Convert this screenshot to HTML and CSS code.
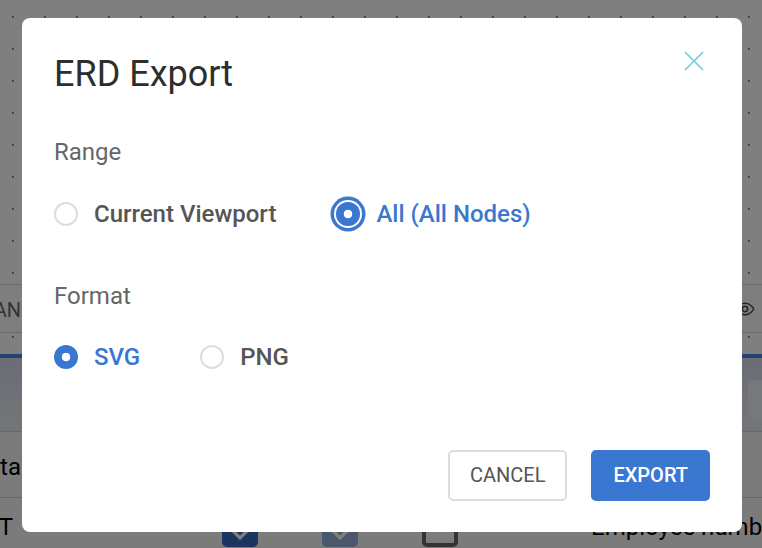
FILE: index.html
```html
<!DOCTYPE html>
<html lang="en">
<head>
<meta charset="utf-8">
<title>ERD Export</title>
<link rel="stylesheet" href="styles.css">
</head>
<body>
<div class="app">
  <div class="canvas"></div>
  <div class="thead">
    <div class="clip"><span class="thead-text">BOOLEAN</span></div>
    <svg class="eye" viewBox="0 0 24 24" width="20" height="20" fill="none" stroke="#444" stroke-width="1.8" stroke-linecap="round" stroke-linejoin="round"><path d="M1.5 12S5.5 5 12 5s10.5 7 10.5 7-4 7-10.5 7S1.5 12 1.5 12z"/><circle cx="12" cy="12" r="3.2"/></svg>
  </div>
  <div class="gapband"></div>
  <div class="accent"></div>
  <div class="group"><div class="card"></div></div>
  <div class="row r1"><div class="clip"><span class="cell-text">Data</span></div></div>
  <div class="row r2">
    <div class="clip clip-narrow"><span class="cell-text">INT</span></div>
    <span class="chk chk-navy"><svg viewBox="0 0 36 36" width="36" height="36"><polyline points="8,17 18,27 28,17" fill="none" stroke="#fff" stroke-width="3.2"/></svg></span>
    <span class="chk chk-slate"><svg viewBox="0 0 36 36" width="36" height="36"><polyline points="8,17 18,27 28,17" fill="none" stroke="#fff" stroke-width="3.2"/></svg></span>
    <span class="chk chk-empty"></span>
    <span class="cell-text col-name">Employee number</span>
  </div>
</div>

<div class="overlay">
  <div class="dialog" role="dialog" aria-labelledby="dlg-title">
    <div class="dlg-head">
      <h2 id="dlg-title" class="dlg-title">ERD Export</h2>
      <button class="close" aria-label="Close">
        <svg viewBox="0 0 20 20" width="20" height="20"><path d="M1 1L19 19M19 1L1 19" stroke="#72cbe7" stroke-width="1.7" fill="none"/></svg>
      </button>
    </div>

    <div class="field">
      <div class="field-label">Range</div>
      <div class="options">
        <label class="opt"><span class="radio"></span><span class="opt-text">Current Viewport</span></label>
        <label class="opt on focus"><span class="radio"></span><span class="opt-text">All (All Nodes)</span></label>
      </div>
    </div>

    <div class="field field-2">
      <div class="field-label">Format</div>
      <div class="options">
        <label class="opt on"><span class="radio"></span><span class="opt-text">SVG</span></label>
        <label class="opt"><span class="radio"></span><span class="opt-text">PNG</span></label>
      </div>
    </div>

    <div class="dlg-foot">
      <button class="btn btn-cancel">CANCEL</button>
      <button class="btn btn-primary">EXPORT</button>
    </div>
  </div>
</div>
</body>
</html>
```

FILE: styles.css
```css
html, body {
  margin: 0;
  padding: 0;
}
body {
  width: 762px;
  height: 548px;
  overflow: hidden;
  font-family: Roboto, "Liberation Sans", sans-serif;
}

/* ---------- background application ---------- */
.app {
  height: 548px;
  overflow: hidden;
  display: flex;
  flex-direction: column;
  background-color: #fff;
  background-image: radial-gradient(circle, #909090 1px, transparent 1.5px);
  background-size: 32px 32px;
  background-position: -3px 1px;
}
.canvas {
  height: 284px;
  flex: none;
}
.thead {
  flex: none;
  height: 47px;
  border-top: 1px solid #d6d6d6;
  border-bottom: 1px solid #d6d6d6;
  background: #fcfcfc;
  display: flex;
  justify-content: space-between;
  align-items: flex-start;
}
.clip {
  width: 21px;
  flex: none;
  overflow: hidden;
  display: flex;
  justify-content: flex-end;
  white-space: nowrap;
}
.clip-narrow {
  width: 13px;
}
.thead-text {
  font-size: 20px;
  line-height: 24px;
  color: #666;
  padding-top: 13px;
}
.eye {
  margin: 14px 7px 0 0;
}
.gapband {
  height: 21px;
  flex: none;
}
.accent {
  height: 4px;
  flex: none;
  background: #4a86e0;
}
.group {
  height: 73px;
  flex: none;
  border-bottom: 1px solid #cfcfcf;
  background: linear-gradient(#d3dbea, #e9ecf1);
  display: flex;
  justify-content: flex-end;
  align-items: flex-start;
}
.card {
  width: 14px;
  height: 40px;
  margin-top: 22px;
  border-radius: 8px 0 0 8px;
  background: #eef1f6;
}
.row {
  flex: none;
  background: #f6f6f6;
  display: flex;
  align-items: flex-start;
  white-space: nowrap;
}
.r1 {
  height: 44px;
  padding-top: 21px;
  border-bottom: 1px solid #cfcfcf;
}
.r2 {
  flex: 1;
  padding-top: 15px;
}
.cell-text {
  font-size: 24px;
  line-height: 28px;
  color: #000;
  white-space: nowrap;
}
.chk {
  flex: none;
  width: 36px;
  height: 36px;
  box-sizing: border-box;
  border-radius: 5px;
  margin-top: -2px;
}
.chk svg {
  display: block;
}
.chk-navy {
  margin-left: 209px;
  background: #366ac0;
}
.chk-slate {
  margin-left: 64px;
  background: #94b0d8;
}
.chk-empty {
  margin-left: 64px;
  border: 4px solid #666;
}
.col-name {
  flex: none;
  margin-left: 133px;
}

/* ---------- modal ---------- */
.overlay {
  position: fixed;
  inset: 0;
  background: rgba(0, 0, 0, 0.5);
  padding: 18px 0 0 22px;
}
.dialog {
  width: 720px;
  height: 514px;
  box-sizing: border-box;
  padding: 32px 32px 31px;
  background: #fff;
  border-radius: 8px;
  display: flex;
  flex-direction: column;
}
.dlg-head {
  display: flex;
  justify-content: space-between;
  align-items: flex-start;
}
.dlg-title {
  margin: 0;
  font-size: 36px;
  font-weight: 400;
  line-height: 48px;
  color: #2e2e2e;
}
.close {
  width: 20px;
  height: 20px;
  padding: 0;
  border: 0;
  background: none;
  margin: 1px 6px 0 0;
}
.close svg {
  display: block;
}
.field-label {
  margin-top: 38px;
  font-size: 24px;
  line-height: 32px;
  color: #666;
}
.field-2 .field-label {
  margin-top: 49px;
}
.options {
  margin-top: 29px;
  height: 34px;
  display: flex;
  align-items: center;
  gap: 60px;
}
.field-2 .options {
  margin-top: 28px;
}
.opt {
  display: flex;
  align-items: center;
  gap: 16px;
  font-size: 24px;
  line-height: 28px;
  font-weight: 500;
  color: #555;
}
.radio {
  flex: none;
  width: 24px;
  height: 24px;
  box-sizing: border-box;
  border: 2px solid #dcdce3;
  border-radius: 50%;
  background: #fff;
}
.opt.on .radio {
  border: none;
  background: radial-gradient(circle, #fff 4px, #3a77d0 4.6px);
}
.opt.on .opt-text {
  color: #3a77d0;
}
.opt.focus .radio {
  box-shadow: 0 0 0 2px #fff, 0 0 0 5.5px #3a77d0;
}
.dlg-foot {
  margin-top: auto;
  display: flex;
  justify-content: flex-end;
  gap: 24px;
}
.btn {
  font-family: Roboto, "Liberation Sans", sans-serif;
  font-size: 20px;
  font-weight: 500;
  line-height: 23px;
  padding: 12px 20px;
  border: 2px solid;
  border-radius: 5px;
}
.btn-cancel {
  background: #fff;
  border-color: #dcdce3;
  color: #555;
  font-weight: 400;
}
.btn-primary {
  background: #3a77d0;
  border-color: #3a77d0;
  color: #fff;
}
```
